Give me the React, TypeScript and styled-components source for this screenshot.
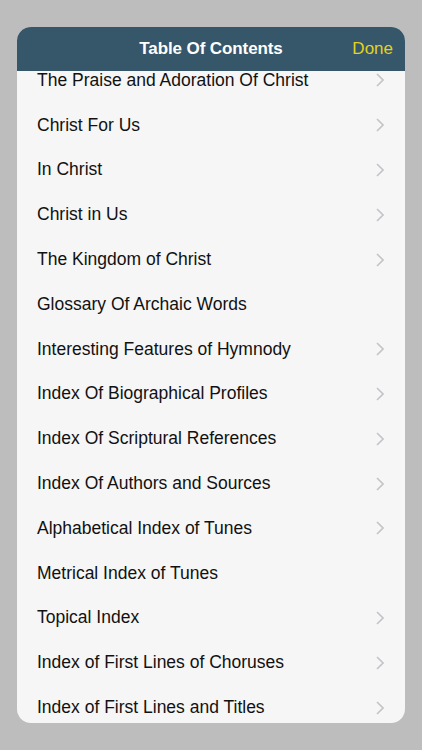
import React from "react";
import styled, { createGlobalStyle } from "styled-components";

const GlobalStyle = createGlobalStyle`
	html, body {
		margin: 0;
		padding: 0;
		background: #bdbdbd;
		font-family: "Liberation Sans", Arial, sans-serif;
	}
`;

const Screen = styled.div`
	width: 422px;
	height: 750px;
	box-sizing: border-box;
	padding: 27px 17px 27px 17px;
	display: flex;
`;

const Card = styled.div`
	flex: 1;
	display: flex;
	flex-direction: column;
	border-radius: 14px;
	overflow: hidden;
	background: #f6f6f6;
`;

const Header = styled.div`
	position: relative;
	z-index: 1;
	height: 44px;
	flex: none;
	background: #36566a;
	display: flex;
	align-items: center;
	justify-content: center;
`;

const Title = styled.div`
	color: #ffffff;
	font-size: 17px;
	font-weight: 700;
	letter-spacing: -0.1px;
`;

const DoneButton = styled.button`
	position: absolute;
	right: 12px;
	top: 0;
	height: 44px;
	border: none;
	background: none;
	padding: 0;
	color: #e3d21f;
	font-family: inherit;
	font-size: 17px;
`;

const List = styled.div`
	flex: 1;
	overflow: hidden;
`;

const Rows = styled.div`
	margin-top: -13px;
`;

const Row = styled.div`
	height: 44.8px;
	display: flex;
	align-items: center;
	padding: 0 21px 0 20px;
`;

const Label = styled.span`
	flex: 1;
	color: #111;
	font-size: 17.5px;
`;

const Chevron = () => (
	<svg width="8" height="14" viewBox="0 0 8 14">
		<path d="M1 1l6 6-6 6" fill="none" stroke="#c4c4c8" strokeWidth="1.6" />
	</svg>
);

const entries: { title: string; more: boolean }[] = [
	{ title: "The Praise and Adoration Of Christ", more: true },
	{ title: "Christ For Us", more: true },
	{ title: "In Christ", more: true },
	{ title: "Christ in Us", more: true },
	{ title: "The Kingdom of Christ", more: true },
	{ title: "Glossary Of Archaic Words", more: false },
	{ title: "Interesting Features of Hymnody", more: true },
	{ title: "Index Of Biographical Profiles", more: true },
	{ title: "Index Of Scriptural References", more: true },
	{ title: "Index Of Authors and Sources", more: true },
	{ title: "Alphabetical Index of Tunes", more: true },
	{ title: "Metrical Index of Tunes", more: false },
	{ title: "Topical Index", more: true },
	{ title: "Index of First Lines of Choruses", more: true },
	{ title: "Index of First Lines and Titles", more: true },
];

export default function App() {
	return (
		<>
			<GlobalStyle />
			<Screen>
				<Card>
					<Header>
						<Title>Table Of Contents</Title>
						<DoneButton>Done</DoneButton>
					</Header>
					<List>
						<Rows>
							{entries.map((entry) => (
								<Row key={entry.title}>
									<Label>{entry.title}</Label>
									{entry.more && <Chevron />}
								</Row>
							))}
						</Rows>
					</List>
				</Card>
			</Screen>
		</>
	);
}
